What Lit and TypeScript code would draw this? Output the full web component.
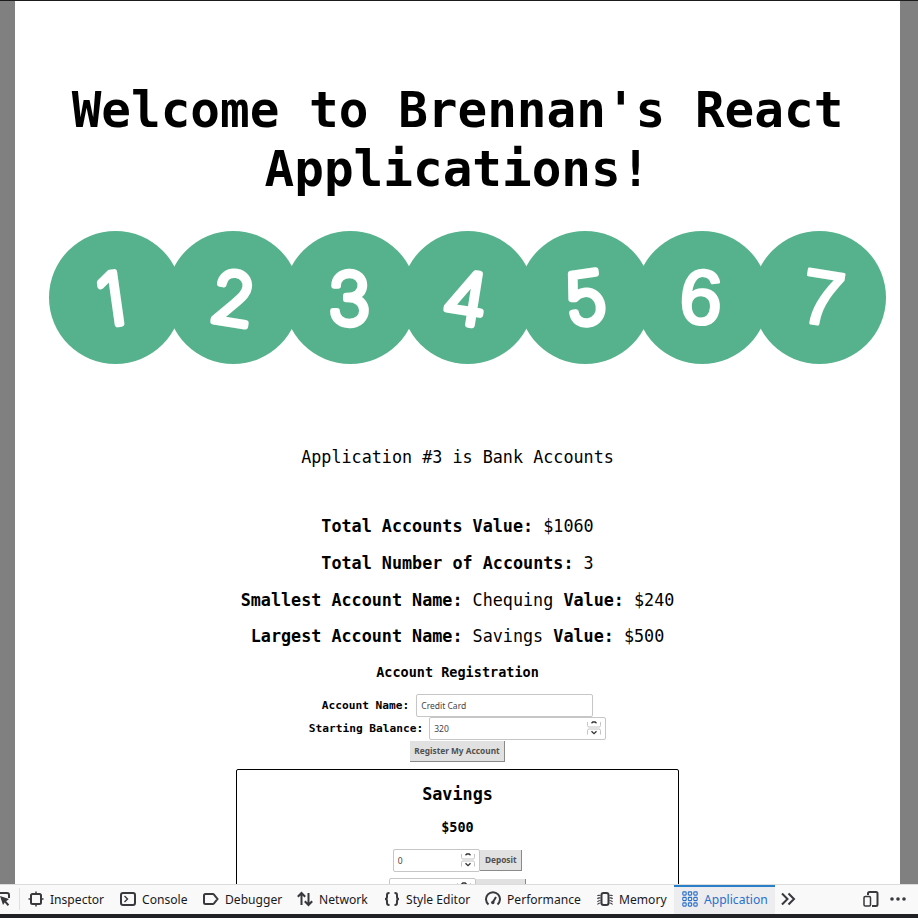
import { LitElement, html, css, svg } from "lit";
import { customElement, property } from "lit/decorators.js";
import { classMap } from "lit/directives/class-map.js";

const DIGITS = [
  { n: "1", cx: 67.5, rot: -8, dx: -4, font: "r" },
  { n: "2", cx: 185.2, rot: 9, dx: 0, font: "r" },
  { n: "3", cx: 302.3, rot: 0, dx: -1, font: "r" },
  { n: "4", cx: 419.7, rot: 9, dx: -2, font: "r" },
  { n: "5", cx: 537.1, rot: -8, dx: 0, font: "r" },
  { n: "6", cx: 654, rot: 4, dx: -1, font: "l" },
  { n: "7", cx: 771.5, rot: 9, dx: 3, font: "l" },
];

@customElement("number-banner")
export class NumberBanner extends LitElement {
  static styles = css`
    :host { display: block; height: 136px; }
    svg { display: block; }
    .disc { fill: #56b28c; }
    .digit { fill: #fff; stroke: #fff; stroke-linejoin: round; text-anchor: middle; }
    .l { font: 77px "Liberation Sans", sans-serif; stroke-width: 3px; }
    .r { font: 200 71px Inter, sans-serif; stroke-width: 6.500px; }
  `;
  render() {
    return html`<svg width="839" height="136" viewBox="0 0 839 136">
      ${DIGITS.map((d) => svg`<circle class="disc" cx=${d.cx} cy="67.5" r="66.5"></circle>`)}
      ${DIGITS.map((d) => svg`<text class="digit ${d.font}" x=${d.cx + d.dx} y="94" transform="rotate(${d.rot} ${d.cx} 67.5)">${d.n}</text>`)}
    </svg>`;
  }
}

@customElement("number-field")
export class NumberField extends LitElement {
  @property() value = "";
  @property({ type: Boolean }) spin = false;
  static styles = css`
    :host { box-sizing: border-box; display: flex; align-items: center; justify-content: space-between; height: 23px; border: 1px solid #c6c6c6; border-radius: 2px; background: #fff; padding: 0 4px 0 4px; font: 8.5px "Noto Sans", sans-serif; color: #444; }
    svg { display: block; }
  `;
  render() {
    return html`<span>${this.value}</span>${this.spin
      ? html`<svg width="14" height="14" viewBox="0 0 14 14" fill="none">
          <path d="M.5 1V4.500Q.5 6 2 6H12Q13.500 6 13.500 4.500V1M.5 13.500V9.500Q.5 8 2 8H12Q13.500 8 13.500 9.500V13.500" stroke="#c4c4c4"></path>
          <path d="M4.500 2.300 5.800 1H8.200L9.500 2.300M4.500 10.300 7 12.700 9.500 10.300" stroke="#333" stroke-width="1.300"></path>
        </svg>`
      : null}`;
  }
}

const ICONS = {
  inspector: svg`<rect x="3" y="3" width="10" height="10" rx="1.500"></rect><path d="M8 .5V3M8 13v2.500M.5 8H3M13 8h2.500" stroke-width="1.500"></path>`,
  console: svg`<rect x="1" y="2" width="14" height="12" rx="2"></rect><path d="m4.500 5 3 3-3 3" stroke-width="1.400"></path>`,
  debugger: svg`<path d="M2.500 3h7.300q.7 0 1.200.6L14.500 8 11 12.400q-.5.6-1.200.6H2.500Q1 13 1 11.500v-7Q1 3 2.500 3Z"></path>`,
  network: svg`<path d="M4.500 14V2M.8 5.800 4.500 2l3.700 3.800M11.500 2v12M7.800 10.200l3.700 3.800 3.700-3.800"></path>`,
  style: svg`<path d="M5.500 2H5Q3 2 3 4v2q0 2-2 2 2 0 2 2v2q0 2 2 2h.5M10.500 2h.5q2 0 2 2v2q0 2 2 2-2 0-2 2v2q0 2-2 2h-.5"></path>`,
  performance: svg`<path d="M3.500 13.500A7 7 0 1 1 12.500 13.500M8 11l3-5"></path><circle cx="7.800" cy="11.500" r="1.700" fill="currentColor" stroke="none"></circle>`,
  memory: svg`<rect x="4.500" y="2" width="7" height="12" rx="2"></rect><path d="M.5 5Q1 3.800 3.500 4.500M.5 8Q1 6.500 3.500 7M.5 11Q1 9.500 3.500 9.500M.5 13.500Q1 12 3.500 12M15.500 5Q15 3.800 12.500 4.500M15.500 8Q15 6.500 12.500 7M15.500 11Q15 9.500 12.500 9.500M15.500 13.500Q15 12 12.500 12" stroke-width="1.100"></path>`,
  application: svg`${[2.5, 8, 13.5].map((y) => [2.5, 8, 13.5].map((x) => svg`<rect x=${x - 1.7} y=${y - 1.6} width="3.400" height="3.200" rx=".8" stroke-width="1.100"></rect>`))}`,
  more: svg`<path d="m2 2.500 5.500 5.500L2 13.500M8.500 2.500 14 8l-5.500 5.500"></path>`,
  responsive: svg`<path d="M5 4V2.500Q5 1 6.500 1H13q1.500 0 1.500 1.500v11q0 1.500-1.500 1.500H9"></path><rect x="1" y="5.500" width="6.500" height="9.500" rx="1.200" stroke-width="1.500"></rect>`,
  dots: svg`<g fill="currentColor" stroke="none"><circle cx="2" cy="8" r="1.800"></circle><circle cx="8" cy="8" r="1.800"></circle><circle cx="14" cy="8" r="1.800"></circle></g>`,
  pick: svg`<path d="M0 2h12q2 0 2 2v3M0 14h4" ></path><path d="M5 5l3 9 1.700-2.500 3 3.500 1.500-1.500-3-3.200L14 8Z" fill="currentColor" stroke="none"></path>`,
};
const icon = (k: keyof typeof ICONS) =>
  html`<svg class="icon" width="16" height="16" viewBox="0 0 16 16">${ICONS[k]}</svg>`;

const TABS: [keyof typeof ICONS, string, string][] = [
  ["inspector", "Inspector", "w92"],
  ["console", "Console", "w83"],
  ["debugger", "Debugger", "w94"],
  ["network", "Network", "w87"],
  ["style", "Style Editor", "w101"],
  ["performance", "Performance", "w112"],
  ["memory", "Memory", "w85"],
  ["application", "Application", "w101"],
];

@customElement("dev-toolbar")
export class DevToolbar extends LitElement {
  static styles = css`
    :host { box-sizing: border-box; display: flex; height: 34px; background: #f9f9fa; border-top: 1px solid #dcdcdc; border-bottom: 4px solid #202124; font: 12.100px "Noto Sans", sans-serif; color: #18181a; white-space: nowrap; }
    .icon { display: block; flex: none; fill: none; stroke: currentColor; stroke-width: 2; color: #38383d; }
    .pick { width: 19px; height: 22px; margin-top: 3px; border-right: 1px solid #e0e0e2; display: flex; align-items: center; justify-content: flex-end; overflow: hidden; }
    .pick .icon { margin-right: 8px; }
    .tab { box-sizing: border-box; display: flex; align-items: center; gap: 6px; padding-left: 8px; padding-bottom: 1px; height: 29px; }
    .w92 { width: 92px; } .w83 { width: 83px; } .w94 { width: 94px; } .w87 { width: 87px; }
    .w101 { width: 101px; } .w112 { width: 112px; } .w85 { width: 85px; }
    .active { background: #ededf0; color: #2a6fc9; box-shadow: inset 0 2px #2a7fc9; }
    .active .icon { color: #2a6fc9; }
    .tail { display: flex; align-items: center; flex: 1; padding: 0 12px 1px 5px; gap: 11px; }
    .push { flex: 1; }
  `;
  render() {
    return html`<div class="pick">${icon("pick")}</div>
      ${TABS.map(([k, label, w]) => html`<div class=${classMap({ tab: true, [w]: true, active: k === "application" })}>${icon(k)}<span>${label}</span></div>`)}
      <div class="tail">${icon("more")}<span class="push"></span>${icon("responsive")}${icon("dots")}</div>`;
  }
}

@customElement("app-root")
export class AppRoot extends LitElement {
  static styles = css`
    :host { box-sizing: border-box; display: flex; flex-direction: column; height: 918px; overflow: hidden; background: #808080; border-top: 1px solid #1c1c1c; color: #000; font-family: "DejaVu Sans Mono", monospace; }
    .page { box-sizing: border-box; flex: 1; min-height: 0; overflow: hidden; margin: 0 18px 0 15px; background: #fff; padding-top: 80px; }
    h1 { margin: 0 0 31px; font-size: 49.300px; line-height: 59px; text-align: center; }
    number-banner { margin-left: 33px; }
    p { margin: 0; text-align: center; font-size: 16.750px; line-height: 20px; white-space: nowrap; }
    .intro { margin: 81px 0 49.300px; }
    .stats { display: grid; gap: 16.700px; }
    h3 { margin: 15.700px 0 11.500px; text-align: center; font-size: 13.500px; line-height: 20px; }
    .row { display: flex; justify-content: center; align-items: center; font-size: 11.200px; font-weight: bold; gap: 7px; height: 23px; }
    .balance-row { gap: 6px; }
    .text { width: 177px; }
    .btn { box-sizing: border-box; height: 21px; display: flex; align-items: center; justify-content: center; background: #e1e1e1; border-right: 1px solid #8a8a8a; border-bottom: 1px solid #8a8a8a; color: #505050; font: bold 8.300px "Noto Sans", sans-serif; }
    .register { width: 95px; }
    .deposit { width: 42px; }
    .withdraw { width: 50px; }
    .card { box-sizing: border-box; width: 443px; height: 160px; margin: 6px auto 0; border: 1px solid #000; border-radius: 2px; padding-top: 14px; }
    h2 { margin: 0; text-align: center; font-size: 16.800px; line-height: 20px; }
    .balance { font-size: 13.500px; font-weight: bold; margin: 13px 0 12px; }
    .tight { gap: 0; margin-bottom: 6px; }
    .amount { width: 87.500px; }
  `;
  render() {
    return html`<div class="page">
        <h1>Welcome to Brennan's React<br />Applications!</h1>
        <number-banner></number-banner>
        <p class="intro">Application #3 is Bank Accounts</p>
        <div class="stats">
          <p><b>Total Accounts Value:</b> $1060</p>
          <p><b>Total Number of Accounts:</b> 3</p>
          <p><b>Smallest Account Name:</b> Chequing <b>Value:</b> $240</p>
          <p><b>Largest Account Name:</b> Savings <b>Value:</b> $500</p>
        </div>
        <h3>Account Registration</h3>
        <div class="row"><span>Account Name:</span><number-field class="text" value="Credit Card"></number-field></div>
        <div class="row balance-row"><span>Starting Balance:</span><number-field class="text" value="320" spin></number-field></div>
        <div class="row"><div class="btn register">Register My Account</div></div>
        <div class="card">
          <h2>Savings</h2>
          <p class="balance">$500</p>
          <div class="row tight"><number-field class="amount" value="0" spin></number-field><div class="btn deposit">Deposit</div></div>
          <div class="row tight"><number-field class="amount" spin></number-field><div class="btn withdraw"></div></div>
        </div>
      </div>
      <dev-toolbar></dev-toolbar>`;
  }
}
